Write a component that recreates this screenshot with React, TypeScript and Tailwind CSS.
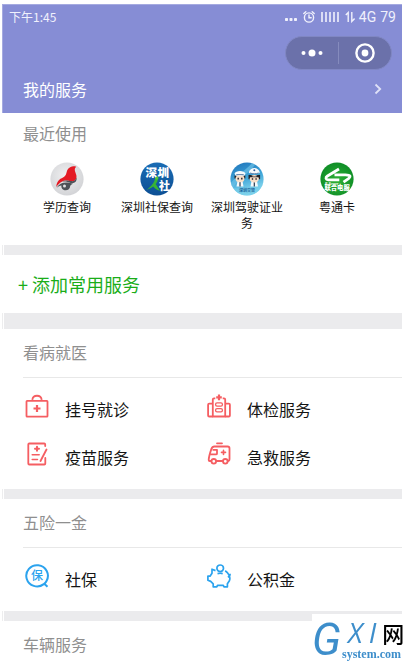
import type { ReactNode } from 'react'

type Service = {
    name: string
    icon: ReactNode
}

function StatusIcons() {
    return (
        <div className="flex items-center gap-1.5">
            <svg className="h-3 w-3" viewBox="0 0 12 12" fill="currentColor">
                <rect x="0" y="7" width="3" height="3" rx="0.8" />
                <rect x="4.5" y="7" width="3" height="3" rx="0.8" />
                <rect x="9" y="7" width="3" height="3" rx="0.8" />
            </svg>
            <svg className="h-3 w-3" viewBox="0 0 12 12" fill="none" stroke="currentColor" strokeWidth="1.4" strokeLinecap="round">
                <circle cx="6" cy="6.5" r="4.6" />
                <path d="M6 4v2.8h2.2M0.8 2.6 2.8 0.8M11.2 2.6 9.2 0.8" />
            </svg>
            <svg className="h-3 w-[18px]" viewBox="0 0 18 12" fill="none" stroke="currentColor" strokeWidth="1.6">
                <path d="M1 1v10M5 1v10M9 1v10M13 1v10M17 1v10" />
            </svg>
            <svg className="h-3 w-2.5" viewBox="0 0 10 12" fill="none" stroke="currentColor" strokeWidth="1.4">
                <path d="M0.8 4 3.2 1.6V11M6.8 1v9.400L9.600 7.600" />
            </svg>
        </div>
    )
}

function EducationLogo() {
    return (
        <svg className="size-[34px]" viewBox="0 0 34 34">
            <defs>
                <radialGradient id="edu" cx="45%" cy="40%" r="60%">
                    <stop offset="0" stopColor="#f0f0f1" />
                    <stop offset="1" stopColor="#d3d4d7" />
                </radialGradient>
            </defs>
            <circle cx="17" cy="17" r="16.6" fill="url(#edu)" />
            <path d="M6.500 26c3.500-5.500 8.500-6.800 16.500-4.300-1.500.5-2.300 1.200-2.700 2-.2 3-2.300 4.600-4.600 4.600-2.700 0-4.700-2-4.300-4.800-1.700.3-3.200 1-4.900 2.500z" fill="#4c5157" />
            <circle cx="14.500" cy="24" r="1.500" fill="#dfe0e2" />
            <path d="M6.300 25c.2-5.700 3.200-8 6.700-9.600 3.800-1.800 3-4.700 4.500-7.600 1.700-3.200 5.700-4.300 8.700-3.100-2.800 2.300-.6 5.300.1 8.300 1 4.200-1.800 7-5.300 6.400-5.200-1.800-9.700-1.200-14.700 5.600z" fill="#e41b25" />
            <path d="M11.500 19.800c3-1.600 6-1.700 9.500-.7 3 .6 5.200-1.100 5.600-3.800.6 4.200-2 6.400-5.400 5.900-3.500-1.500-6.300-1.900-9.700-1.400z" fill="#4c5157" />
        </svg>
    )
}

function SocialSecurityLogo() {
    return (
        <svg className="size-[34px]" viewBox="0 0 34 34">
            <defs>
                <linearGradient id="social" x1="0" y1="0" x2="0" y2="1">
                    <stop offset="0" stopColor="#1a6cb4" />
                    <stop offset="1" stopColor="#0c4f94" />
                </linearGradient>
            </defs>
            <circle cx="17" cy="17" r="16.600" fill="url(#social)" />
            <path d="M17.800 15.500c.5 5-3 9.500-11.300 12.500 4.500-3.500 8-7 8.800-12.500z" fill="#37b435" />
            <path d="M14 21.500c2.500.5 3.500 3.500 6 7.300-3.500-.8-6-3-8-5.800z" fill="#37b435" />
            <circle cx="16.800" cy="16" r="1.700" fill="#53c53b" />
            <g className="font-['Noto_Sans_CJK_SC',sans-serif] font-black" fill="#fff">
                <text x="5.500" y="14.500" fontSize="11.500">深</text>
                <text x="17.500" y="14.500" fontSize="11.500">圳</text>
                <text x="19" y="28" fontSize="11">社</text>
            </g>
        </svg>
    )
}

function DriverLogo() {
    return (
        <svg className="size-[34px]" viewBox="0 0 34 34">
            <defs>
                <linearGradient id="driver" x1="0" y1="0" x2="0.300" y2="1">
                    <stop offset="0" stopColor="#1c70b8" />
                    <stop offset="0.550" stopColor="#3fa5d8" />
                    <stop offset="1" stopColor="#8edcf0" />
                </linearGradient>
                <clipPath id="driverClip">
                    <circle cx="17" cy="17" r="16.600" />
                </clipPath>
            </defs>
            <g clipPath="url(#driverClip)">
                <rect width="34" height="34" fill="url(#driver)" />
                <path d="M0 22C8 12 14 10 23 0h4C20 11 10 15 2 27z" fill="#6cc0e6" opacity="0.700" />
                <path d="M0 25c9 3 22 2 34-5v14H0z" fill="#74cce8" opacity="0.700" />
                <path d="M7.500 19h5l1 5.500h-7zM21.500 19h5.500l1 5.500h-7.500z" fill="#f5fafc" />
                <path d="M10 20v4.500M24.300 20v4.500" stroke="#29384e" strokeWidth="1.200" />
                <path d="M4.500 13.500h10.800v3H4.500zM18.500 13h11.600v4.200H18.500z" fill="#24242a" />
                <ellipse cx="10" cy="16.700" rx="4.400" ry="3.600" fill="#f8dfc9" />
                <ellipse cx="24.300" cy="16.800" rx="4.600" ry="3.800" fill="#f8dfc9" />
                <path d="M19.500 12.500c2.500 2.800 7.500 2.800 9.700 0v2.700h-9.700z" fill="#24242a" />
                <path d="M4.500 11.500C5.500 8 14.500 8 15.500 11.500l-1.200 2.200H5.700zM18.700 10.500c1.500-6 9.700-6 11.200 0-2.800 2.200-8.400 2.200-11.200 0z" fill="#f7fafc" />
                <path d="M6.300 12.600h7.400M20 11c2.500 1 6.200 1 8.700 0" stroke="#356194" strokeWidth="0.800" fill="none" />
                <circle cx="24.300" cy="8.300" r="1" fill="#345f9a" />
                <path d="M8.200 15.800v1.800M11.800 15.800v1.800M22.500 16.200v1.600M26.100 16.200v1.600" stroke="#26222a" strokeWidth="1.400" />
                <text x="17" y="30" fontSize="4" textAnchor="middle" fill="#1c659c" className="font-['Noto_Sans_CJK_SC',sans-serif] font-bold">深圳交警</text>
            </g>
        </svg>
    )
}

function TollCardLogo() {
    return (
        <svg className="size-[34px]" viewBox="0 0 34 34">
            <defs>
                <radialGradient id="toll" cx="50%" cy="55%" r="60%">
                    <stop offset="0" stopColor="#2fb135" />
                    <stop offset="1" stopColor="#0b8a25" />
                </radialGradient>
            </defs>
            <circle cx="17" cy="17" r="16.600" fill="url(#toll)" />
            <path
                d="M19 7 7.500 14c-2.400 1.600-1.800 3.800.8 3.800h11M14.500 12.800h11c5 0 5.500 1.600 3 3.800l-5 3.600"
                fill="none"
                stroke="#fff"
                strokeWidth="2.800"
                strokeLinejoin="round"
            />
            <g fill="#fff">
                <text x="5" y="22.500" fontSize="3.600" className="font-['Liberation_Sans',sans-serif] font-bold italic">E-Serve</text>
                <text x="4.500" y="28.200" fontSize="6.300" className="font-['Noto_Sans_CJK_SC',sans-serif] font-black">联合电服</text>
            </g>
        </svg>
    )
}

const lineIcon = 'size-6 fill-none stroke-[#f55e62] stroke-[1.8px]'

function MedicalKitIcon() {
    return (
        <svg className={lineIcon} viewBox="0 0 24 24" strokeLinejoin="round">
            <rect x="1.500" y="6.800" width="21" height="15.800" rx="0.600" />
            <path d="M7.300 5.800C8 .400 16 .400 16.700 5.800" />
            <path d="M12 11v7M8.500 14.500h7" strokeWidth="2.200" />
        </svg>
    )
}

function HospitalIcon() {
    return (
        <svg className={lineIcon} viewBox="0 0 24 24" strokeLinejoin="round">
            <path d="M5.800 22.500H2.200c-.7 0-1.100-.4-1.100-1.100V10.700c0-.7.400-1.100 1.100-1.100h3.600M18.200 22.500h3.600c.7 0 1.100-.4 1.100-1.100V10.700c0-.7-.4-1.100-1.100-1.100h-3.600" />
            <path d="M8.300 4.300H7c-.7 0-1.200.5-1.200 1.200v17h12.400v-17c0-.7-.5-1.200-1.200-1.200h-1.300" />
            <path d="M12 .6v5.600M9.200 3.400h5.600" strokeWidth="2.200" />
            <rect x="8.600" y="8.900" width="6.800" height="3.200" rx="1.400" strokeWidth="1.300" />
            <rect x="8.600" y="14.700" width="6.800" height="3.200" rx="1.400" strokeWidth="1.300" />
        </svg>
    )
}

function VaccineIcon() {
    return (
        <svg className={lineIcon} viewBox="0 0 24 24" strokeLinejoin="round" strokeLinecap="round">
            <path d="M20.200 4V2.500c0-.7-.3-1-1-1H4.300c-.7 0-1 .3-1 1v19c0 .7.300 1 1 1h15c.7 0 1-.3 1-1V16" />
            <path d="M12 4.700v4M10 6.700h4" strokeWidth="2" />
            <path d="M7.200 12.800h7M7.200 17.500h5.300" strokeWidth="1.500" />
            <path d="m21.500 7.500-6 11.500" />
        </svg>
    )
}

function AmbulanceIcon() {
    return (
        <svg className={lineIcon} viewBox="0 0 24 24" strokeLinejoin="round" strokeLinecap="round">
            <path d="M4 19H2.700c-.7 0-1-.4-1-1.100.2-3.700 1.500-7.500 2.700-11 .6-1.700 1.200-2.400 3-2.400h13.200c1.200 0 1.900.7 1.900 1.900v10.700c0 1.200-.6 1.900-1.600 1.900M9.500 19h6" />
            <circle cx="6.800" cy="19.300" r="2.300" />
            <circle cx="18.300" cy="19.300" r="2.300" />
            <path d="M4 12.400h5c.7 0 1-.4 1-1V7.800H6.200M10 1.300h5" />
            <path d="M16.500 8.400v4M14.500 10.400h4" strokeWidth="1.600" />
        </svg>
    )
}

function InsuranceIcon() {
    return (
        <svg className="size-6" viewBox="0 0 24 24">
            <path d="M18.800 20.100A10.800 10.600 0 1 1 21.500 17c-.5 1-1.400 2-2.200 2.800l3.200 3" fill="none" stroke="#2ba3ee" strokeWidth="2" />
            <text x="12" y="16" fontSize="12" textAnchor="middle" fill="#2ba3ee" className="font-['Noto_Sans_CJK_SC',sans-serif] font-medium">保</text>
        </svg>
    )
}

function PiggyBankIcon() {
    return (
        <svg className="size-6 fill-none stroke-[#2ba3ee]" viewBox="0 0 24 24" strokeWidth="1.700" strokeLinejoin="round">
            <circle cx="13.200" cy="4.300" r="3.300" />
            <path d="M8.500 6.600 5 5.200v4L3 12.200H.9v4l2.800 1.200 2.500 2.400v3h3.600l.7-1.500h5.800l.7 1.500h3.400v-3l2-3c1.300-3.300-.3-7.500-4.200-10M20.800 13c1.500-.4 2.300-1.500 2.300-3.200M10.500 9.600c2-.5 3.600-.5 5.200 0" />
        </svg>
    )
}

const recentServices: Service[] = [
    { name: '学历查询', icon: <EducationLogo /> },
    { name: '深圳社保查询', icon: <SocialSecurityLogo /> },
    { name: '深圳驾驶证业务', icon: <DriverLogo /> },
    { name: '粤通卡', icon: <TollCardLogo /> },
]

const medicalServices: Service[] = [
    { name: '挂号就诊', icon: <MedicalKitIcon /> },
    { name: '体检服务', icon: <HospitalIcon /> },
    { name: '疫苗服务', icon: <VaccineIcon /> },
    { name: '急救服务', icon: <AmbulanceIcon /> },
]

const insuranceServices: Service[] = [
    { name: '社保', icon: <InsuranceIcon /> },
    { name: '公积金', icon: <PiggyBankIcon /> },
]

function Divider({ className }: { className: string }) {
    return (
        <div className={`border-l border-[#ededee] pl-px ${className}`}>
            <div className="h-full bg-[#ebebed]" />
        </div>
    )
}

function ServiceSection({ title, services }: { title: string; services: Service[] }) {
    return (
        <section className="pl-[21px]">
            <h2 className="border-b border-[#e8e8e8] pt-[11px] pb-[13px] text-base leading-6 text-[#8f8f8f]">{title}</h2>
            <div className="grid grid-cols-2 pt-[7px] pr-[15px] pb-2">
                {services.map(service => (
                    <a key={service.name} href="#" className="flex h-12 items-center gap-3.5">
                        <span className="flex w-7 justify-center pb-1.5">{service.icon}</span>
                        <span className="text-base leading-6">{service.name}</span>
                    </a>
                ))}
            </div>
        </section>
    )
}

export default function App() {
    return (
        <div className="bg-white pt-1 pr-2 pl-0.5 font-['Noto_Sans_CJK_SC',sans-serif] text-[#141414]">
            <header className="border-t border-l border-[#a5aae0] bg-[#868dd5] text-white">
                <div className="flex h-6 items-center justify-between pr-1.5 pl-1.5 text-xs text-[#f0f1fc]">
                    <span>下午1:45</span>
                    <div className="flex items-center gap-1 font-['Roboto',sans-serif] text-sm">
                        <StatusIcons />
                        <span>4G</span>
                        <span>79</span>
                    </div>
                </div>
                <div className="flex justify-end pt-[7px] pr-2.5">
                    <div className="flex h-[34px] w-[107px] items-center rounded-full border border-[#8087c3] bg-[#6b71aa]">
                        <button type="button" aria-label="更多" className="flex h-full flex-1 items-center justify-center">
                            <svg className="h-2 w-[22px]" viewBox="0 0 22 8" fill="currentColor">
                                <circle cx="2.500" cy="4" r="2" />
                                <circle cx="11" cy="4" r="3.500" />
                                <circle cx="19.500" cy="4" r="2" />
                            </svg>
                        </button>
                        <div className="h-[22px] w-px bg-[#858bbd]" />
                        <button type="button" aria-label="关闭" className="flex h-full flex-1 items-center justify-center">
                            <svg className="size-5" viewBox="0 0 20 20">
                                <circle cx="10" cy="10" r="8.600" fill="none" stroke="currentColor" strokeWidth="2.400" />
                                <circle cx="10" cy="10" r="3.400" fill="currentColor" />
                            </svg>
                        </button>
                    </div>
                </div>
                <a href="#" className="flex items-center justify-between pt-[7px] pr-5 pb-3 pl-5">
                    <span className="text-base leading-6">我的服务</span>
                    <svg className="h-3 w-2" viewBox="0 0 8 12" fill="none" stroke="#dfe1f7" strokeWidth="1.800">
                        <path d="m1.500 1.500 4.700 4.500-4.700 4.500" />
                    </svg>
                </a>
            </header>

            <section className="pt-2 pb-3.5">
                <h2 className="pl-[21px] text-base leading-6 text-[#8f8f8f]">最近使用</h2>
                <div className="grid grid-cols-4 px-5 pt-[17px]">
                    {recentServices.map(service => (
                        <a key={service.name} href="#" className="flex flex-col items-center gap-[3px] px-2">
                            {service.icon}
                            <span className="text-center text-xs leading-4">{service.name}</span>
                        </a>
                    ))}
                </div>
            </section>

            <Divider className="h-2.5" />
            <button type="button" className="flex h-[58px] w-full items-center gap-1 pl-4 text-lg text-[#1aad19]">
                <span>+</span>
                <span>添加常用服务</span>
            </button>
            <Divider className="h-4" />

            <ServiceSection title="看病就医" services={medicalServices} />
            <Divider className="h-2.5" />
            <ServiceSection title="五险一金" services={insuranceServices} />
            <Divider className="h-2.5" />

            <h2 className="pt-[11px] pl-[21px] text-base leading-6 text-[#8f8f8f]">车辆服务</h2>

            <div className="fixed right-0 bottom-0 flex h-12 w-[98px] bg-white text-[#3d8ecb]">
                <span className="w-[30px] font-['Roboto',sans-serif] text-[44px] leading-[52px] italic">G</span>
                <div className="pt-1">
                    <div className="flex items-center gap-1.5 pl-1.5 leading-7">
                        <span className="font-['Open_Sans',sans-serif] text-[28px] italic">X</span>
                        <span className="font-['Open_Sans',sans-serif] text-[28px] italic">I</span>
                        <span className="text-[22px] font-medium text-black">网</span>
                    </div>
                    <div className="font-['Liberation_Serif',serif] text-xs leading-4 font-bold">system.com</div>
                </div>
            </div>
        </div>
    )
}
